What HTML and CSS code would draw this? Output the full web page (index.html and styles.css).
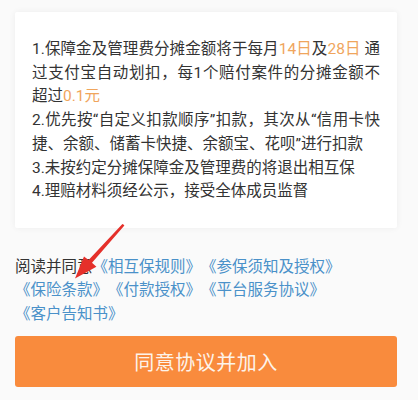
FILE: index.html
```html
<!DOCTYPE html>
<html lang="zh-CN">
<head>
<meta charset="utf-8">
<link rel="stylesheet" href="styles.css">
</head>
<body>
<div class="page">
  <div class="card">
    <p class="item">1.保障金及管理费分摊金额将于每月<span class="hl">14日</span>及<span class="hl">28日</span> 通过支付宝自动划扣，每1个赔付案件的分摊金额不超过<span class="hl">0.1元</span></p>
    <p class="item">2.优先按“自定义扣款顺序”扣款，其次从“信用卡快捷、余额、储蓄卡快捷、余额宝、花呗”进行扣款</p>
    <p class="item">3.未按约定分摊保障金及管理费的将退出相互保</p>
    <p class="item">4.理赔材料须经公示，接受全体成员监督</p>
  </div>
  <p class="agree">阅读并同意<a class="link">《相互保规则》</a><a class="link">《参保须知及授权》</a><a class="link">《保险条款》</a><a class="link">《付款授权》</a><a class="link">《平台服务协议》</a><a class="link">《客户告知书》</a></p>
  <div class="btn">同意协议并加入</div>
</div>
<svg class="arrow" width="418" height="400" viewBox="0 0 418 400">
  <polygon fill="#e5302a" points="123.4,224.4 124.4,225.4 92,262.8 96.4,266.8 75,278.5 84,256.4 88.6,260 122.4,224"/>
</svg>
</body>
</html>
```
FILE: styles.css
```css
html, body {
  margin: 0;
  padding: 0;
  background: #fafafa;
}
body {
  position: relative;
  width: 418px;
  height: 400px;
  overflow: hidden;
  font-family: Roboto, "Noto Sans CJK SC", sans-serif;
  color: #333333;
  text-spacing-trim: space-all;
}
.page {
  padding: 12px 0 0 15px;
  width: 382px;
}
.card {
  background: #ffffff;
  box-shadow: 0 0 6px rgba(0, 0, 0, 0.06);
  padding: 26px 17px 24px 17px;
  border-radius: 2px;
}
.item {
  margin: 0;
  font-size: 15.5px;
  line-height: 23.7px;
  text-align: justify;
}
.hl {
  color: #f0a55c;
}
.agree {
  margin: 26px 0 0 0;
  font-family: "Noto Sans CJK SC", sans-serif;
  font-size: 15.5px;
  line-height: 23.5px;
  color: #333333;
  text-spacing-trim: space-all;
}
.link {
  color: #4a91c9;
  white-space: nowrap;
}
.btn {
  margin-top: 12px;
  height: 51px;
  background: #f98b3d;
  border-radius: 3px;
  color: #fdf3ea;
  font-size: 20px;
  display: flex;
  align-items: center;
  justify-content: center;
  letter-spacing: 0.5px;
}
.arrow {
  position: absolute;
  left: 0;
  top: 0;
  pointer-events: none;
}
```
